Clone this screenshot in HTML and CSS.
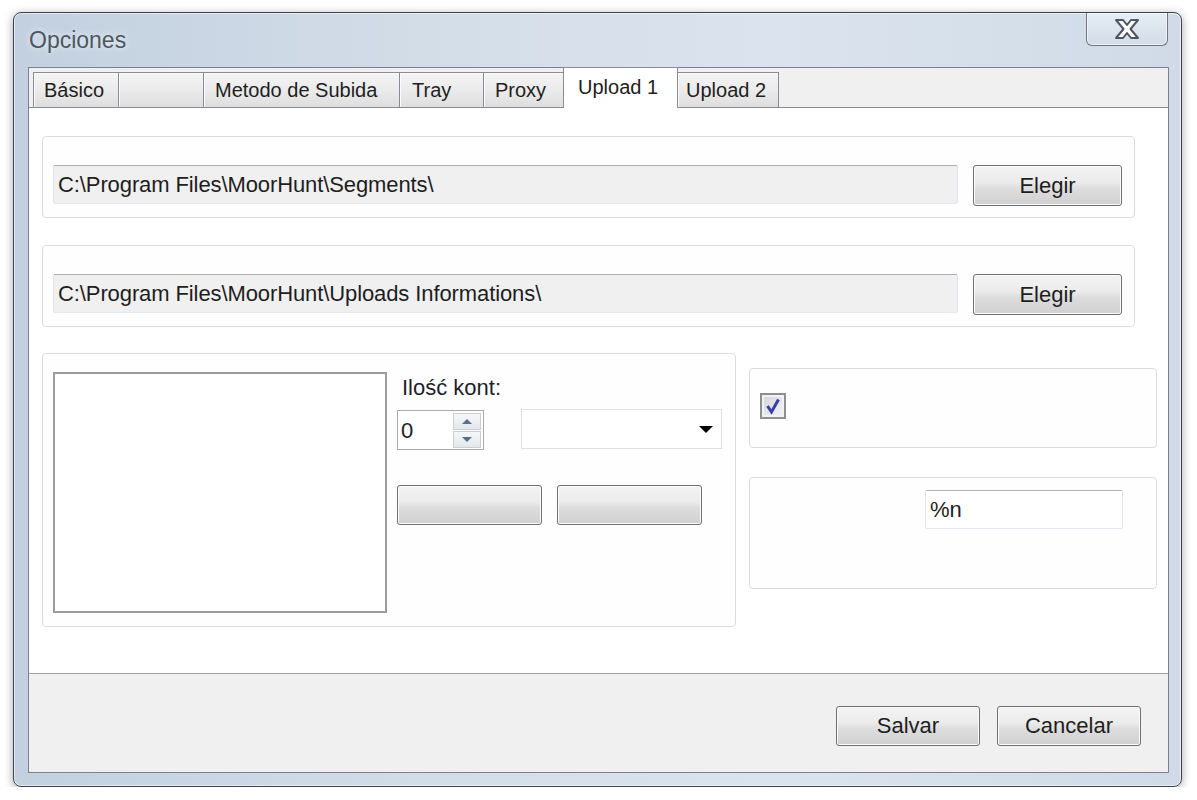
FILE: index.html
```html
<!DOCTYPE html>
<html lang="es">
<head>
  <meta charset="UTF-8" />
  <meta name="viewport" content="width=device-width, initial-scale=1.0" />
  <title>Opciones</title>
  <link rel="stylesheet" href="styles.css">
</head>
<body>

<div class="window">
  <div class="titlebar">
    <span class="title">Opciones</span>
    <div class="close-btn">
      <svg width="26" height="22" viewBox="0 0 26 22">
        <polygon points="2,2 9,2 13,7 17,2 24,2 16.5,11 24,20 17,20 13,15 9,20 2,20 9.5,11"
                 fill="#ffffff" stroke="#50565d" stroke-width="2" stroke-linejoin="round" />
      </svg>
    </div>
  </div>

  <div class="client">
    <div class="tabcontrol">
      <div class="tabstrip">
        <div class="tab">Básico</div>
        <div class="tab"></div>
        <div class="tab">Metodo de Subida</div>
        <div class="tab">Tray</div>
        <div class="tab">Proxy</div>
        <div class="tab selected">Upload 1</div>
        <div class="tab">Upload 2</div>
      </div>

      <div class="tabpage">
        <div class="group path-group">
          <div class="textbox readonly">C:\Program Files\MoorHunt\Segments\</div>
          <button class="btn btn-elegir">Elegir</button>
        </div>

        <div class="group path-group second">
          <div class="textbox readonly">C:\Program Files\MoorHunt\Uploads Informations\</div>
          <button class="btn btn-elegir">Elegir</button>
        </div>

        <div class="lower">
          <div class="group accounts-group">
            <div class="listbox"></div>
            <div class="accounts-side">
              <div class="label">Ilość kont:</div>
              <div class="accounts-row">
                <div class="numeric">
                  <span class="numeric-value">0</span>
                  <div class="spin">
                    <div class="spin-btn"><span class="arrow-up"></span></div>
                    <div class="spin-btn"><span class="arrow-down"></span></div>
                  </div>
                </div>
                <div class="combo"><span class="combo-arrow"></span></div>
              </div>
              <div class="accounts-buttons">
                <button class="btn btn-small"></button>
                <button class="btn btn-small"></button>
              </div>
            </div>
          </div>

          <div class="right-col">
            <div class="group check-group">
              <div class="checkbox">
                <svg width="18" height="18" viewBox="0 0 18 18">
                  <path d="M3.5 9 L7.5 15 L14.5 2.5" stroke="#3b3fa3" stroke-width="3" fill="none" />
                </svg>
              </div>
            </div>
            <div class="group format-group">
              <div class="textbox format-box">%n</div>
            </div>
          </div>
        </div>
      </div>
    </div>

    <div class="bottom-panel">
      <button class="btn btn-dialog">Salvar</button>
      <button class="btn btn-dialog">Cancelar</button>
    </div>
  </div>
</div>

</body>
</html>
```

FILE: styles.css
```css
body {
  margin: 0;
  background: #ffffff;
  font-family: "Liberation Sans", Arial, sans-serif;
  color: #1e1e1e;
}

.window {
  box-sizing: border-box;
  width: 1169px;
  height: 775px;
  margin: 12px 0 0 13px;
  padding: 0 12px 13px 14px;
  border: 1px solid #3d434a;
  border-radius: 8px;
  background: linear-gradient(to right, #c2d0df 0%, #d3dde8 35%, #dbe4ee 65%, #d0dbe7 100%);
  box-shadow: 0 2px 10px rgba(0, 0, 0, 0.35), inset 0 0 0 1px rgba(255, 255, 255, 0.55);
  display: flex;
  flex-direction: column;
}

.titlebar {
  height: 54px;
  display: flex;
  align-items: flex-start;
}

.title {
  padding: 14px 0 0 1px;
  font-size: 23px;
  line-height: 26px;
  color: #4c5763;
  text-shadow: 0 0 6px rgba(255, 255, 255, 0.9);
}

.close-btn {
  margin-left: auto;
  margin-right: 1px;
  width: 82px;
  height: 33px;
  box-sizing: border-box;
  border: 1px solid #6c7681;
  border-top: none;
  border-radius: 0 0 6px 6px;
  background: linear-gradient(#e6edf4, #d3dde8);
  box-shadow: inset 0 0 0 1px rgba(255, 255, 255, 0.6);
  display: flex;
  align-items: center;
  justify-content: center;
}

.client {
  height: 706px;
  box-sizing: border-box;
  border: 1px solid #77828e;
  background: #f0f0f0;
  display: flex;
  flex-direction: column;
}

.tabcontrol {
  flex: 1;
  display: flex;
  flex-direction: column;
}

.tabstrip {
  height: 40px;
  box-sizing: border-box;
  padding-left: 4px;
  border-bottom: 1px solid #898c95;
  display: flex;
  align-items: flex-end;
}

.tab {
  box-sizing: border-box;
  height: 35px;
  padding-left: 10px;
  border: 1px solid #898c95;
  border-right: none;
  border-bottom: none;
  background: linear-gradient(#f4f4f4, #ebebeb 50%, #dedede);
  box-shadow: inset 1px 1px 0 #fbfbfb;
  font-size: 20px;
  line-height: 34px;
  color: #1e1e1e;
  white-space: nowrap;
}

.tab:nth-child(1) { width: 85px; }
.tab:nth-child(2) { width: 85px; }
.tab:nth-child(3) { width: 196px; padding-left: 11px; }
.tab:nth-child(4) { width: 84px; padding-left: 12px; }
.tab:nth-child(5) { width: 80px; padding-left: 11px; }
.tab:nth-child(7) { width: 101px; padding-left: 8px; border-left: none; border-right: 1px solid #898c95; }

.tab.selected {
  width: 115px;
  height: 41px;
  margin-bottom: -1px;
  padding-left: 14px;
  border-right: 1px solid #898c95;
  background: #ffffff;
  box-shadow: none;
  line-height: 38px;
  position: relative;
}

.tabpage {
  flex: 1;
  box-sizing: border-box;
  padding: 28px 11px 0 13px;
  background: #ffffff;
  border-bottom: 1px solid #a0a0a0;
}

.group {
  box-sizing: border-box;
  border: 1px solid #d9dde1;
  border-radius: 4px;
  background: #fefefe;
}

.path-group {
  height: 82px;
  margin-right: 22px;
  padding: 28px 12px 0 10px;
  display: flex;
  align-items: flex-start;
  gap: 15px;
}

.path-group.second {
  margin-top: 27px;
}

.textbox {
  box-sizing: border-box;
  height: 39px;
  padding-left: 4px;
  border: 1px solid #e2e3ea;
  border-top-color: #abadb3;
  border-bottom-color: #e3e9ef;
  border-radius: 2px;
  background: #ffffff;
  font-size: 22px;
  line-height: 37px;
  color: #1e1e1e;
  white-space: nowrap;
}

.textbox.readonly {
  flex: 1;
  background: #f0f0f0;
  letter-spacing: -0.1px;
}

.btn {
  box-sizing: border-box;
  height: 40px;
  border: 1px solid #707070;
  border-radius: 3px;
  background: linear-gradient(#f3f3f3 0%, #ebebeb 42%, #dddddd 58%, #d0d0d0 100%);
  box-shadow: inset 0 0 0 1px #fbfbfb;
  font-family: "Liberation Sans", Arial, sans-serif;
  font-size: 22px;
  color: #1e1e1e;
  padding: 0;
}

.btn-elegir {
  width: 149px;
  height: 41px;
}

.lower {
  margin-top: 26px;
  display: flex;
  align-items: flex-start;
  gap: 13px;
}

.accounts-group {
  width: 694px;
  height: 274px;
  padding: 18px 0 0 10px;
  display: flex;
  align-items: flex-start;
  gap: 10px;
}

.listbox {
  box-sizing: border-box;
  width: 334px;
  height: 241px;
  border: 2px solid #9c9c9c;
  background: #ffffff;
}

.accounts-side {
  padding-top: 3px;
}

.label {
  font-size: 22px;
  line-height: 25px;
  color: #1e1e2a;
  padding-left: 5px;
}

.accounts-row {
  margin-top: 10px;
  display: flex;
  align-items: flex-start;
  gap: 37px;
}

.numeric {
  box-sizing: border-box;
  width: 87px;
  height: 40px;
  border: 1px solid #a9a9a9;
  background: #ffffff;
  display: flex;
  align-items: center;
  padding-left: 3px;
  padding-right: 2px;
}

.numeric-value {
  flex: 1;
  font-size: 22px;
  line-height: 25px;
}

.spin {
  width: 28px;
  height: 35px;
  display: flex;
  flex-direction: column;
  gap: 1px;
}

.spin-btn {
  flex: 1;
  box-sizing: border-box;
  border: 1px solid #c9ced5;
  background: linear-gradient(#f6f7f9, #e4e7eb);
  display: flex;
  align-items: center;
  justify-content: center;
}

.arrow-up {
  width: 0;
  height: 0;
  border-left: 5px solid transparent;
  border-right: 5px solid transparent;
  border-bottom: 5px solid #5c6d8e;
}

.arrow-down {
  width: 0;
  height: 0;
  border-left: 5px solid transparent;
  border-right: 5px solid transparent;
  border-top: 5px solid #5c6d8e;
}

.combo {
  box-sizing: border-box;
  width: 201px;
  height: 40px;
  margin-top: -1px;
  border: 1px solid #e0e0e0;
  background: #ffffff;
  display: flex;
  align-items: center;
  justify-content: flex-end;
  padding-right: 8px;
}

.combo-arrow {
  width: 0;
  height: 0;
  border-left: 7px solid transparent;
  border-right: 7px solid transparent;
  border-top: 7px solid #000000;
}

.accounts-buttons {
  margin-top: 35px;
  display: flex;
  gap: 15px;
}

.btn-small {
  width: 145px;
}

.right-col {
  margin-top: 15px;
  display: flex;
  flex-direction: column;
  gap: 29px;
}

.check-group {
  width: 408px;
  height: 80px;
  padding: 24px 0 0 10px;
}

.checkbox {
  box-sizing: border-box;
  width: 26px;
  height: 26px;
  border: 2px solid #8f8f8f;
  background: linear-gradient(135deg, #d3d5dc, #f4f4f6);
  box-shadow: inset 0 0 0 2px #f2f2f4;
  display: flex;
  align-items: center;
  justify-content: center;
}

.format-group {
  width: 408px;
  height: 112px;
  padding: 12px 0 0 175px;
}

.format-box {
  width: 198px;
  border-top-color: #b0b2b8;
}

.bottom-panel {
  height: 98px;
  box-sizing: border-box;
  padding: 32px 27px 0 0;
  display: flex;
  justify-content: flex-end;
  align-items: flex-start;
  gap: 17px;
}

.btn-dialog {
  width: 144px;
}
```
